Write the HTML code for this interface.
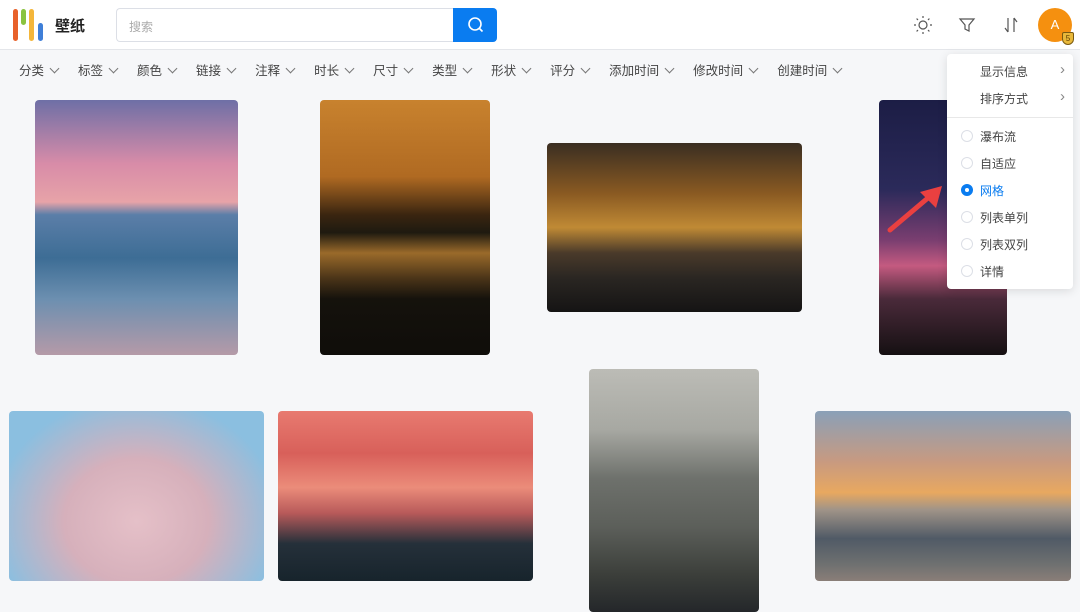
<!DOCTYPE html>
<html><head><meta charset="utf-8"><style>
*{margin:0;padding:0;box-sizing:border-box}
body{width:1080px;height:612px;overflow:hidden;background:#f6f7f9;font-family:"Liberation Sans","Noto Sans CJK SC",sans-serif;position:relative}
.hdr{position:absolute;left:0;top:0;width:1080px;height:50px;background:#fff;border-bottom:1px solid #e4e6ea}
.bar{position:absolute;top:0;width:5px;border-radius:3px}
.logo{position:absolute;left:55px;top:15px;font-size:15px;font-weight:bold;color:#222}
.search{position:absolute;left:116px;top:8px;width:338px;height:34px;border:1px solid #dcdfe6;border-right:none;border-radius:4px 0 0 4px;background:#fff;font-size:12px;color:#aaa;padding:9px 12px}
.sbtn{position:absolute;left:453px;top:8px;width:44px;height:34px;background:#0a7cf0;border-radius:0 4px 4px 0}
.filters{position:absolute;top:60px;left:19px;font-size:12.5px;color:#444;display:flex;gap:0}
.filters span{margin-right:20px;white-space:nowrap}
.filters span:after{content:"";display:inline-block;width:6px;height:6px;border-right:1px solid #777;border-bottom:1px solid #777;transform:rotate(45deg);margin-left:7px;position:relative;top:-3px}
.img{position:absolute;border-radius:4px}
.menu{position:absolute;left:947px;top:54px;width:126px;height:235px;background:#fff;border-radius:4px;box-shadow:0 2px 10px rgba(0,0,0,.12);font-size:12px;color:#444}
.mi{position:absolute;left:33px}
.r{position:absolute;left:14px;width:12px;height:12px;border:1px solid #dcdfe6;border-radius:50%}
</style></head><body>
<div class="hdr">
 <div class="bar" style="left:13px;top:9px;height:32px;background:#e8612a"></div>
 <div class="bar" style="left:21px;top:9px;height:16px;background:#8ac33f"></div>
 <div class="bar" style="left:29px;top:9px;height:32px;background:#f4b63a"></div>
 <div class="bar" style="left:38px;top:23px;height:18px;background:#3f7fd8"></div>
 <div class="logo">壁纸</div>
 <div class="search">搜索</div>
 <div class="sbtn"><svg width="44" height="34"><circle cx="22" cy="16" r="6" fill="none" stroke="#fff" stroke-width="1.6"/><path d="M26.5 20.5l3 3" stroke="#fff" stroke-width="1.6"/></svg></div>
 <svg style="position:absolute;left:912px;top:14px" width="22" height="22"><circle cx="11" cy="11" r="4" fill="none" stroke="#555" stroke-width="1.2"/><g stroke="#555" stroke-width="1.2"><path d="M11 2v2M11 18v2M2 11h2M18 11h2M4.6 4.6l1.4 1.4M16 16l1.4 1.4M4.6 17.4L6 16M16 6l1.4-1.4"/></g></svg>
 <svg style="position:absolute;left:957px;top:15px" width="20" height="20"><path d="M3 4h14l-5 6v6l-4-2v-4z" fill="none" stroke="#555" stroke-width="1.2"/></svg>
 <svg style="position:absolute;left:1001px;top:14px" width="20" height="22"><path d="M7 4v14M7 18l-3-4M13 18V4M13 4l3 4" fill="none" stroke="#555" stroke-width="1.2"/></svg>
 <div style="position:absolute;left:1038px;top:8px;width:34px;height:34px;border-radius:50%;background:#f5900f;color:#fff;font-size:13px;text-align:center;line-height:34px">A</div>
 <div style="position:absolute;left:1062px;top:32px;width:12px;height:13px;background:#e8b83a;border:1px solid #7a5a10;border-radius:2px 2px 6px 6px;font-size:8px;text-align:center;line-height:11px;color:#5a3c00">5</div>
</div>
<div class="filters"><span>分类</span><span>标签</span><span>颜色</span><span>链接</span><span>注释</span><span>时长</span><span>尺寸</span><span>类型</span><span>形状</span><span>评分</span><span>添加时间</span><span>修改时间</span><span>创建时间</span></div>

<div class="img" style="left:35px;top:100px;width:203px;height:255px;background:linear-gradient(#6e6fa6 0%,#d88ca8 25%,#e7a3a8 40%,#5b7ea8 45%,#3d6d95 62%,#6c8fb0 78%,#b59aa8 100%)"></div>
<div class="img" style="left:320px;top:100px;width:170px;height:255px;background:linear-gradient(#c8822e 0%,#b06a22 30%,#3a2510 45%,#1e1a10 52%,#9a6a2a 60%,#4a3418 70%,#15120c 78%,#0f0d0a 100%)"></div>
<div class="img" style="left:547px;top:143px;width:255px;height:169px;background:linear-gradient(#3a2e22 0%,#8a5a22 30%,#c08a35 50%,#4a3a2a 65%,#2a2622 80%,#151414 100%)"></div>
<div class="img" style="left:879px;top:100px;width:128px;height:255px;background:linear-gradient(#1c1d45 0%,#2b2a5a 35%,#7a3e70 55%,#c45a80 65%,#4a2a3a 78%,#151012 100%)"></div>
<div class="img" style="left:9px;top:411px;width:255px;height:170px;background:radial-gradient(ellipse at 50% 65%,#e5c0c8 0%,#d6b0bb 40%,#8bbfe0 80%),#8cc0e2"></div>
<div class="img" style="left:278px;top:411px;width:255px;height:170px;background:linear-gradient(#e87a70 0%,#d8605a 25%,#eb8c7a 45%,#b85a5a 60%,#25303a 78%,#17242c 100%)"></div>
<div class="img" style="left:589px;top:369px;width:170px;height:243px;background:linear-gradient(#bcbcb6 0%,#a7a8a2 25%,#6e716c 45%,#5c5f5a 65%,#3b3e3a 85%,#24272a 100%)"></div>
<div class="img" style="left:815px;top:411px;width:256px;height:170px;background:linear-gradient(#8aa0b8 0%,#c89a80 30%,#e8a860 48%,#a09488 58%,#505a66 75%,#6e7070 90%,#8a7e78 100%)"></div>

<svg style="position:absolute;left:880px;top:180px" width="70" height="60"><path d="M10 50L55 12" stroke="#ea4040" stroke-width="5" stroke-linecap="round"/><path d="M62 6L40 12L56 28z" fill="#ea4040"/></svg>

<div class="menu">
 <div class="mi" style="top:9px">显示信息</div><div style="position:absolute;right:8px;top:7px;color:#888;font-size:15px">›</div>
 <div class="mi" style="top:36px">排序方式</div><div style="position:absolute;right:8px;top:34px;color:#888;font-size:15px">›</div>
 <div style="position:absolute;left:0;right:0;top:63px;border-top:1px solid #e8e8e8"></div>
 <div class="r" style="top:76px"></div><div class="mi" style="top:74px">瀑布流</div>
 <div class="r" style="top:103px"></div><div class="mi" style="top:101px">自适应</div>
 <div class="r" style="top:130px;border:4px solid #0a7cf0;background:#fff"></div><div class="mi" style="top:128px;color:#0a7cf0">网格</div>
 <div class="r" style="top:157px"></div><div class="mi" style="top:155px">列表单列</div>
 <div class="r" style="top:184px"></div><div class="mi" style="top:182px">列表双列</div>
 <div class="r" style="top:211px"></div><div class="mi" style="top:209px">详情</div>
</div>
</body></html>
